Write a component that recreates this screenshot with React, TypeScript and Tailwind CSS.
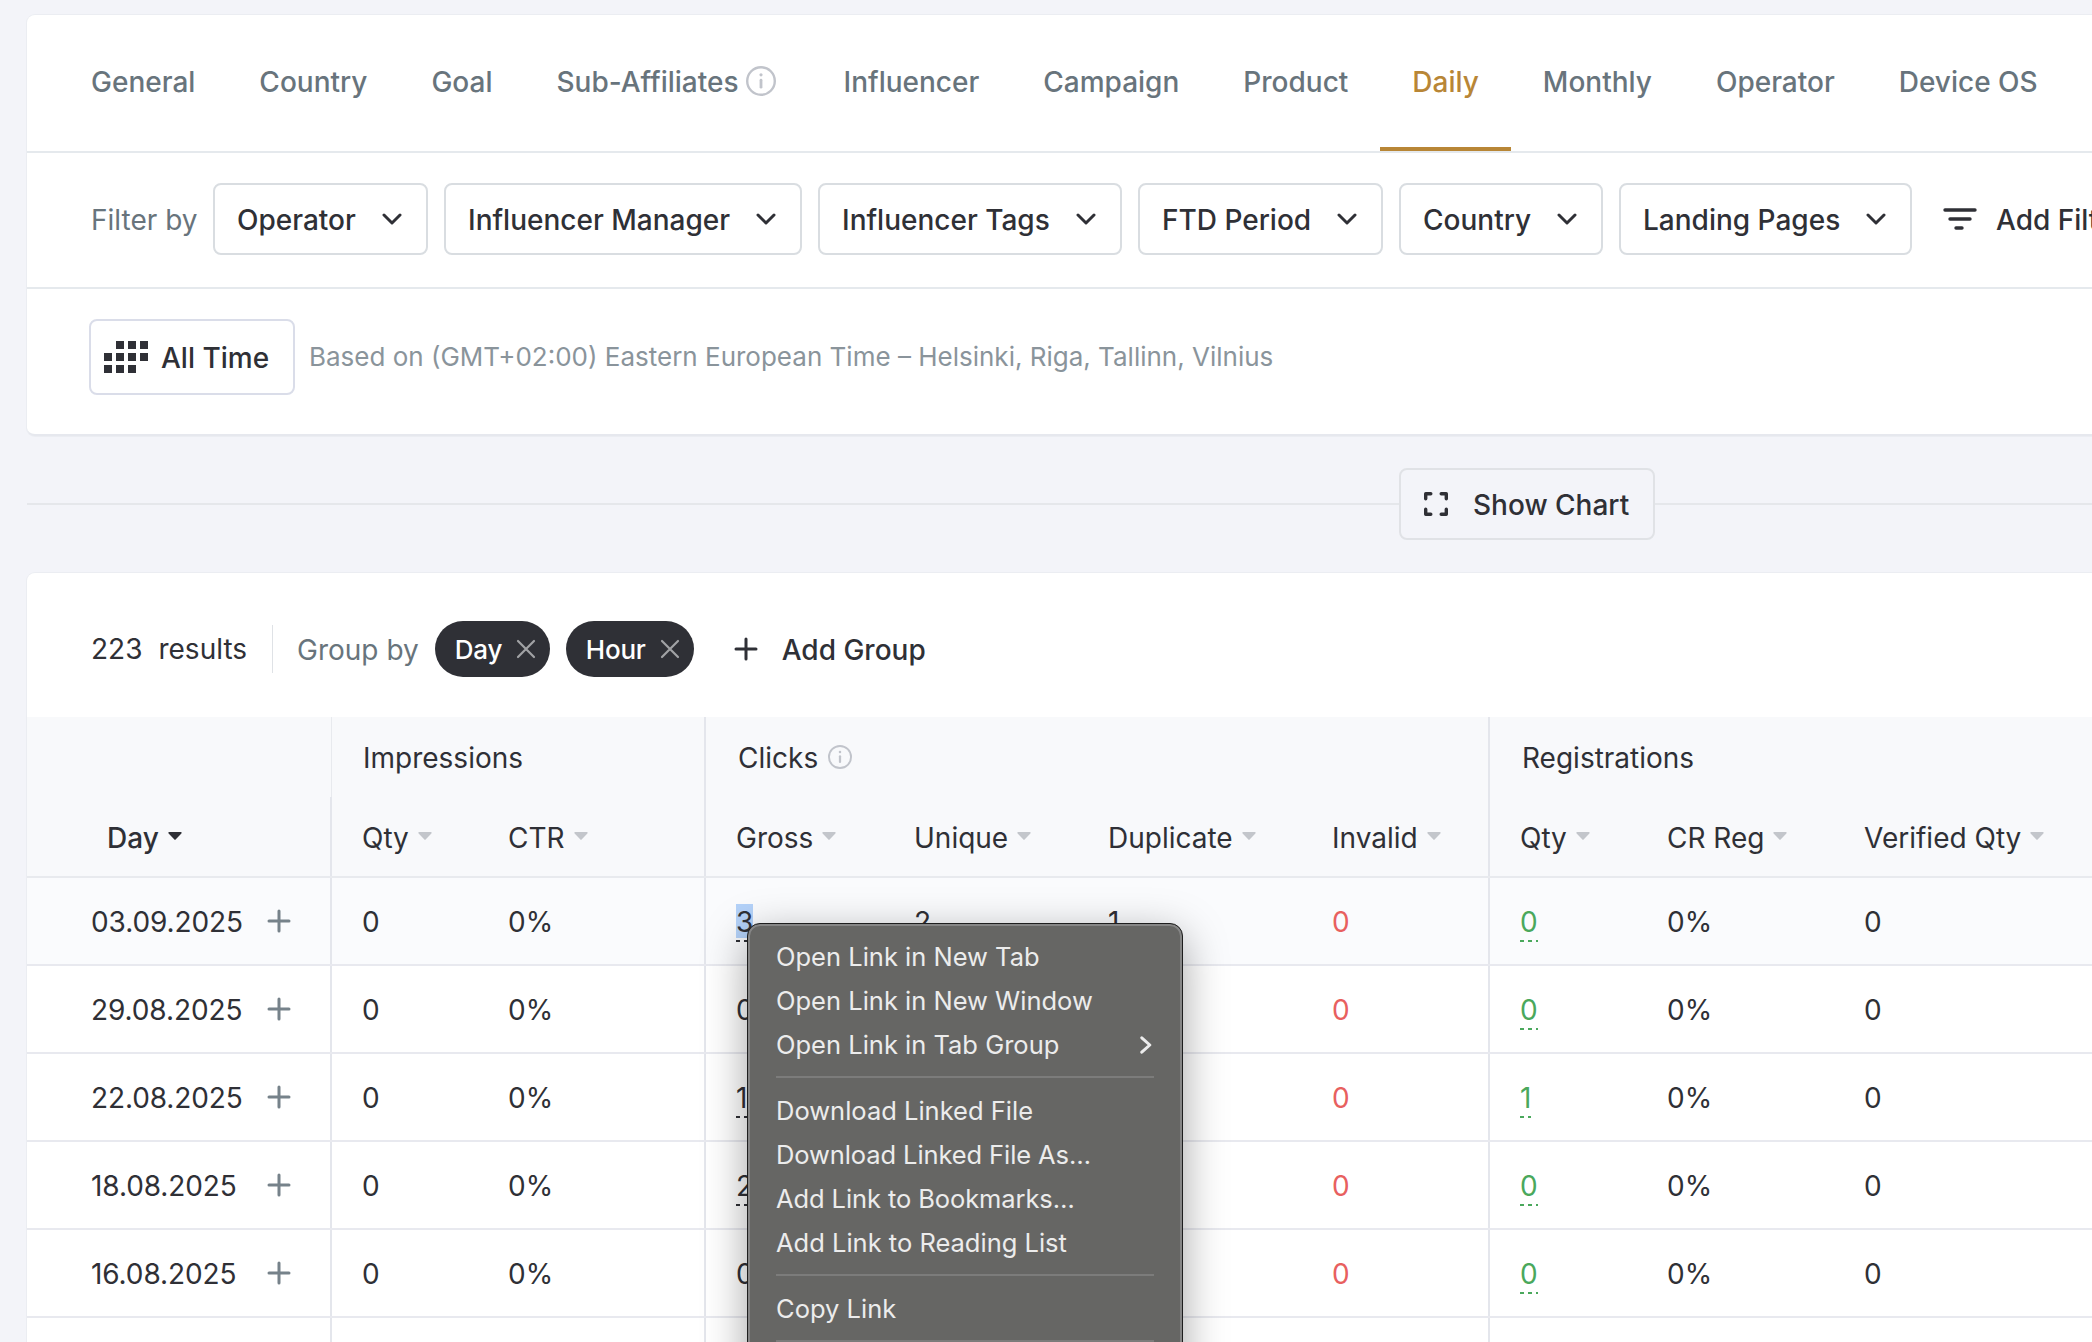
import { type ReactNode } from "react";

type Tone = "default" | "danger" | "success";

const TABS = [
  { label: "General" },
  { label: "Country" },
  { label: "Goal" },
  { label: "Sub-Affiliates", info: true },
  { label: "Influencer" },
  { label: "Campaign" },
  { label: "Product" },
  { label: "Daily", active: true },
  { label: "Monthly" },
  { label: "Operator" },
  { label: "Device OS" },
];

const FILTERS = [
  { label: "Operator", width: "w-[215px]" },
  { label: "Influencer Manager", width: "w-[358px]" },
  { label: "Influencer Tags", width: "w-[304px]" },
  { label: "FTD Period", width: "w-[245px]" },
  { label: "Country", width: "w-[204px]" },
  { label: "Landing Pages", width: "w-[293px]" },
];

const ROWS = [
  { date: "03.09.2025", gross: "3", unique: "2", duplicate: "1", regs: "0", selected: true },
  { date: "29.08.2025", gross: "0", unique: "0", duplicate: "0", regs: "0" },
  { date: "22.08.2025", gross: "1", unique: "1", duplicate: "0", regs: "1" },
  { date: "18.08.2025", gross: "2", unique: "1", duplicate: "1", regs: "0" },
  { date: "16.08.2025", gross: "0", unique: "0", duplicate: "0", regs: "0" },
  { date: "15.08.2025", gross: "0", unique: "0", duplicate: "0", regs: "0" },
];

const MENU_GROUPS = [
  ["Open Link in New Tab", "Open Link in New Window", "Open Link in Tab Group"],
  ["Download Linked File", "Download Linked File As…", "Add Link to Bookmarks…", "Add Link to Reading List"],
  ["Copy Link"],
  ["Copy"],
];

const GRID = "grid grid-cols-[305px_146px_228px_178px_194px_224px_188px_147px_197px_1fr]";

function InfoIcon({ className }: { className: string }) {
  return (
    <svg viewBox="0 0 30 30" fill="none" className={className}>
      <circle cx="15" cy="15" r="13.8" stroke="#c1c4cb" strokeWidth="2.4" />
      <path d="M15 14.2v7" stroke="#c1c4cb" strokeWidth="2.8" strokeLinecap="round" />
      <circle cx="15" cy="8.8" r="1.6" fill="#c1c4cb" />
    </svg>
  );
}

function Chevron() {
  return (
    <svg viewBox="0 0 20 12" fill="none" className="h-3 w-5">
      <path d="M2 2l8 8 8-8" stroke="#2f3036" strokeWidth="3" strokeLinecap="round" strokeLinejoin="round" />
    </svg>
  );
}

function Plus({ className }: { className: string }) {
  return (
    <svg viewBox="0 0 24 24" fill="none" className={className}>
      <path d="M12 2v20M2 12h20" stroke="currentColor" strokeWidth="3" strokeLinecap="round" />
    </svg>
  );
}

function SortCaret({ className = "text-[#c3c6cb]" }: { className?: string }) {
  return (
    <svg viewBox="0 0 14 8" className={`-mt-0.5 h-2 w-3.5 shrink-0 ${className}`}>
      <path d="M1.2 0h11.6a.8.8 0 0 1 .6 1.4L7.6 7.6a.8.8 0 0 1-1.2 0L.6 1.4A.8.8 0 0 1 1.2 0Z" fill="currentColor" />
    </svg>
  );
}

function CalendarDots() {
  const cells = [
    [1, 0], [2, 0], [3, 0],
    [0, 1], [1, 1], [2, 1], [3, 1],
    [0, 2], [1, 2], [2, 2],
  ];
  return (
    <svg viewBox="0 0 44 32" className="h-8 w-11">
      {cells.map(([x, y]) => (
        <rect key={`${x}-${y}`} x={x * 12} y={y * 12} width="8" height="8" fill="#2f3036" />
      ))}
    </svg>
  );
}

function Chip({ label, className }: { label: string; className: string }) {
  return (
    <div className={`flex h-14 items-center rounded-full bg-[#2f3036] pl-5 text-[26px] font-medium tracking-[-0.2px] text-white ${className}`}>
      <span className="flex-1 pt-px">{label}</span>
      <svg viewBox="0 0 20 20" fill="none" className="mr-3.5 h-5 w-5">
        <path d="M2 2l16 16M18 2l-16 16" stroke="#a1a2a5" strokeWidth="2.2" strokeLinecap="round" />
      </svg>
    </div>
  );
}

function HeadCell({ label, className = "pl-[30px]" }: { label: string; className?: string }) {
  return (
    <div className={`flex items-center gap-[9px] ${className}`}>
      <span className="pt-[3px]">{label}</span>
      <SortCaret />
    </div>
  );
}

function Cell({
  value,
  tone = "default",
  linked,
  selected,
  className = "pl-[30px]",
}: {
  value: string;
  tone?: Tone;
  linked?: boolean;
  selected?: boolean;
  className?: string;
}) {
  const color = tone === "danger" ? "text-[#e8605f]" : tone === "success" ? "text-[#4aa85c]" : "text-[#2f3036]";
  return (
    <div className={`flex items-center ${color} ${className}`}>
      {linked ? (
        <div className="flex flex-col gap-0.5 pt-1">
          <span className={`h-[34px] leading-9 ${selected ? "bg-[#b4d2f9]" : ""}`}>{value}</span>
          <div className="h-0.5 bg-[repeating-linear-gradient(90deg,currentColor_0_4px,transparent_4px_8px)]" />
        </div>
      ) : (
        <span className="pt-0.5">{value}</span>
      )}
    </div>
  );
}

function ContextMenu() {
  return (
    <div className="absolute left-[747px] top-[923px] w-[436px] rounded-[13px] border border-[#1e1e1e] bg-[#666664] shadow-[0_12px_44px_rgba(0,0,0,0.36),inset_0_0_0_2px_#868686]">
      <div className="px-7 pt-[11px] text-[25.5px] text-[#ececec]">
        {MENU_GROUPS.map((group, i) => (
          <div key={group[0]}>
            {i > 0 && <div className="mb-[11px] mt-[9px] h-0.5 bg-[#7c7c7b]" />}
            {group.map((item) => (
              <div key={item} className="flex h-11 items-center justify-between">
                <span className={item.endsWith("…") ? "tracking-[-0.1px]" : ""}>{item}</span>
                {item.endsWith("Tab Group") && (
                  <svg viewBox="0 0 12 18" fill="none" className="mr-0.5 h-[18px] w-3">
                    <path d="M1.8 1.8L9.8 9l-8 7.2" stroke="#ececec" strokeWidth="3" strokeLinecap="round" strokeLinejoin="round" />
                  </svg>
                )}
              </div>
            ))}
          </div>
        ))}
      </div>
    </div>
  );
}

function Row({ children, className = "" }: { children: ReactNode; className?: string }) {
  return <div className={`flex items-center pl-16 ${className}`}>{children}</div>;
}

export default function App() {
  return (
    <div className="relative h-[1342px] w-[2092px] overflow-hidden whitespace-nowrap bg-[#f3f4f9] pl-[27px] pt-[15px] font-['Inter',sans-serif] text-[28px] text-[#2f3036]">
      <section className="h-[421px] w-[2120px] rounded-bl-lg rounded-tl-lg border-b-2 border-[#e6e8ee] bg-white shadow-[0_0_0_1px_#ebedf2]">
        <nav className="flex h-[138px] border-b-2 border-[#e5e9ed] pl-8 font-medium text-[#68747c]">
          {TABS.map((tab) => (
            <div
              key={tab.label}
              className={`flex items-center gap-[7px] border-b-4 pl-8 pt-0.5 ${tab.info ? "pr-9" : "pr-8"} ${
                tab.active ? "border-[#b88636] text-[#b88636]" : "border-transparent"
              }`}
            >
              {tab.label}
              {tab.info && <InfoIcon className="mb-0.5 h-[30px] w-[30px]" />}
            </div>
          ))}
        </nav>
        <Row className="h-[136px] border-b-2 border-[#e5e9ed]">
          <span className="w-[122px] text-[#68747c]">Filter by</span>
          <div className="mb-0.5 flex gap-4">
            {FILTERS.map((filter) => (
              <button
                key={filter.label}
                type="button"
                className={`flex h-[72px] items-center justify-between rounded-lg border-2 border-[#d9dde1] pl-[22px] pr-6 font-medium ${filter.width}`}
              >
                <span className="pt-0.5">{filter.label}</span>
                <Chevron />
              </button>
            ))}
          </div>
          <svg viewBox="0 0 34 22" fill="none" className="mb-0.5 ml-[31px] h-[22px] w-[34px]">
            <path d="M2 2h30M7 11h20M13 20h6" stroke="#2f3036" strokeWidth="3.4" strokeLinecap="round" />
          </svg>
          <span className="ml-[19px] font-medium">Add Filter</span>
        </Row>
        <Row className="h-[136px]">
          <button
            type="button"
            className="-ml-0.5 flex h-[76px] w-[206px] items-center gap-[13px] rounded-lg border-2 border-[#dadde9] pl-[13px] font-medium"
          >
            <CalendarDots />
            <span className="pt-0.5">All Time</span>
          </button>
          <span className="mb-0.5 ml-3.5 text-[26px] text-[#8a949b]">
            Based on (GMT+02:00) Eastern European Time – Helsinki, Riga, Tallinn, Vilnius
          </span>
        </Row>
      </section>

      <div className="flex h-[136px] w-[2120px] items-center">
        <div className="h-0.5 w-[1372px] bg-[#e5e7eb]" />
        <button
          type="button"
          className="flex h-[72px] w-64 items-center rounded-lg border-2 border-[#e0e2e6] pl-[23px] font-medium"
        >
          <svg viewBox="0 0 24 24" fill="none" className="mr-[25px] h-6 w-6">
            <path
              d="M1.7 6.8V1.7h5.1M17.2 1.7h5.1v5.1M22.3 17.2v5.1h-5.1M6.8 22.3H1.7v-5.1"
              stroke="#2f3036"
              strokeWidth="3.4"
              strokeLinecap="round"
              strokeLinejoin="round"
            />
          </svg>
          <span className="pt-0.5">Show Chart</span>
        </button>
        <div className="h-0.5 flex-1 bg-[#e5e7eb]" />
      </div>

      <section className="mt-px w-[2120px] rounded-tl-lg bg-white shadow-[0_0_0_1px_#ebedf2]">
        <Row className="h-36 pt-2">
          <span className="mr-4">223</span>
          <span>results</span>
          <div className="ml-[25px] h-12 w-px bg-[#dfe2e6]" />
          <span className="ml-6 pt-0.5 text-[#68747c]">Group by</span>
          <Chip label="Day" className="ml-4 w-[115px]" />
          <Chip label="Hour" className="ml-4 w-32" />
          <Plus className="ml-10 h-6 w-6" />
          <span className="ml-6 pt-0.5 font-medium">Add Group</span>
        </Row>

        <div className="border-b-2 border-[#e8eaee] bg-[#f8f9fb]">
          <div className="grid h-20 grid-cols-[305px_374px_784px_1fr]">
            <div className="border-r border-[#e8eaee]" />
            <div className="flex items-center border-r-2 border-[#e4e6ec] pl-[31px] pt-0.5">Impressions</div>
            <div className="flex items-center gap-2.5 border-r-2 border-[#e4e6ec] pl-8 pt-0.5">
              Clicks
              <InfoIcon className="mb-0.5 h-6 w-6" />
            </div>
            <div className="flex items-center pl-8 pt-0.5">Registrations</div>
          </div>
          <div className={`${GRID} h-[79px]`}>
            <div className="flex items-center gap-[9px] border-r-2 border-[#e4e6ec] pl-20 font-medium">
              <span className="pt-[3px]">Day</span>
              <SortCaret className="text-[#2f3036]" />
            </div>
            <HeadCell label="Qty" />
            <HeadCell label="CTR" className="border-r-2 border-[#e4e6ec] pl-[30px]" />
            <HeadCell label="Gross" />
            <HeadCell label="Unique" />
            <HeadCell label="Duplicate" />
            <HeadCell label="Invalid" className="border-r-2 border-[#e4e6ec] pl-[30px]" />
            <HeadCell label="Qty" />
            <HeadCell label="CR Reg" />
            <HeadCell label="Verified Qty" />
          </div>
        </div>

        {ROWS.map((row) => (
          <div
            key={row.date}
            className={`${GRID} h-[88px] border-b-2 border-[#e8e9ef] ${row.selected ? "bg-[#fafbfd]" : "bg-white"}`}
          >
            <div className="flex items-center justify-between border-r-2 border-[#e4e6ec] pl-16 pr-[39px]">
              <span className="pt-0.5 tracking-[-0.1px]">{row.date}</span>
              <Plus className="h-6 w-6 text-[#76828a]" />
            </div>
            <Cell value="0" />
            <Cell value="0%" className="border-r-2 border-[#e4e6ec] pl-[30px]" />
            <Cell value={row.gross} linked={row.gross !== "0"} selected={row.selected} />
            <Cell value={row.unique} />
            <Cell value={row.duplicate} />
            <Cell value="0" tone="danger" className="border-r-2 border-r-[#e4e6ec] pl-[30px]" />
            <Cell value={row.regs} tone="success" linked />
            <Cell value="0%" />
            <Cell value="0" />
          </div>
        ))}
      </section>

      <ContextMenu />
    </div>
  );
}
